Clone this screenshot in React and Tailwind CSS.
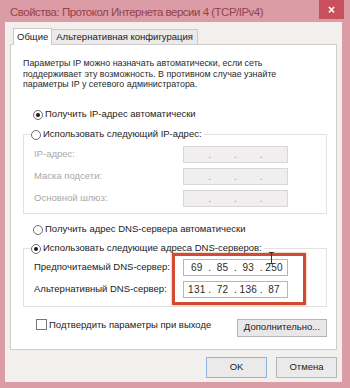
const ui = { fontFamily: '"Liberation Sans", Arial, sans-serif' };

function Radio({ checked, label }) {
  return (
    <div className="flex items-center gap-[2px] h-[14px]">
      <span className="w-[10px] h-[10px] rounded-full border border-[#6d6d6d] bg-white flex items-center justify-center">
        {checked && <span className="w-[4px] h-[4px] rounded-full bg-[#1a1a1a]" />}
      </span>
      <span className="text-[9.5px] text-[#222]">{label}</span>
    </div>
  );
}

function IpBox({ values, disabled }) {
  const segs = values || ['', '', '', ''];
  return (
    <div
      className={`w-[105px] h-[17px] border flex items-center ${
        disabled ? 'bg-[#f0eeee] border-[#d8d6d6] text-[#9a9a9a]' : 'bg-white border-[#b9b6b6] text-[#2a2a2a]'
      }`}
    >
      {segs.map((v, i) => (
        <div key={i} className="flex-1 flex items-center h-full">
          <span className="flex-1 text-center text-[10px] tracking-[0.3px]">{v}</span>
          {i < 3 && <span className="w-0 flex justify-center text-[10px]">.</span>}
        </div>
      ))}
    </div>
  );
}

function Row({ label, disabled, values }) {
  return (
    <div className="flex items-center justify-between h-[17px] pl-[3px] pr-[31px]">
      <span className={`text-[9.5px] ${disabled ? 'text-[#a8a8a8]' : 'text-[#222]'}`}>{label}</span>
      <IpBox disabled={disabled} values={values} />
    </div>
  );
}

export default function App() {
  return (
    <div className="w-[350px] h-[388px] bg-[#dc9ca5] flex flex-col" style={ui}>
      {/* title bar */}
      <div className="h-[22px] flex items-start justify-between pl-[10px] pr-[6px]">
        <span className="mt-[4px] whitespace-nowrap text-[11.5px] tracking-[-0.5px] text-[#93434e]">
          Свойства: Протокол Интернета версии 4 (TCP/IPv4)
        </span>
        <div className="w-[25px] h-[19px] bg-[#c8505a] text-white flex items-center justify-center text-[12px] font-bold">
          ×
        </div>
      </div>

      {/* client area */}
      <div className="ml-[5px] mr-[8px] mb-[6px] flex-1 bg-[#f2efef] px-[5px] pt-[6px] flex flex-col">
        {/* tabs */}
        <div className="flex items-end h-[16px] pl-[3px] text-[9.5px] text-[#222]">
          <div className="h-[17px] -mb-px px-[3px] bg-white border border-b-0 border-[#cfcaca] flex items-center relative z-10">
            Общие
          </div>
          <div className="h-[15px] px-[4px] bg-[#ece9e9] border border-b-0 border-l-0 border-[#cfcaca] flex items-center">
            Альтернативная конфигурация
          </div>
        </div>

        {/* panel */}
        <div className="relative h-[306px] bg-white border border-[#d2cdcd] pl-[12px] pr-[9px] pt-[13px] flex flex-col">
          <p className="text-[8.9px] leading-[10.5px] text-[#2a2a2a]">
            Параметры IP можно назначать автоматически, если сеть
            <br />
            поддерживает эту возможность. В противном случае узнайте
            <br />
            параметры IP у сетевого администратора.
          </p>

          <div className="mt-[18px] ml-[10px]">
            <Radio checked label="Получить IP-адрес автоматически" />
          </div>

          <fieldset className="mt-[6px] border border-[#e4e1e1] px-[7px] pb-[6px]">
            <legend className="px-0 bg-white pr-[2px]">
              <Radio label="Использовать следующий IP-адрес:" />
            </legend>
            <div className="flex flex-col gap-[5px] mt-[4px]">
              <Row label="IP-адрес:" disabled />
              <Row label="Маска подсети:" disabled />
              <Row label="Основной шлюз:" disabled />
            </div>
          </fieldset>

          <div className="mt-[9px] ml-[10px]">
            <Radio label="Получить адрес DNS-сервера автоматически" />
          </div>

          <fieldset className="mt-[5px] border border-[#e4e1e1] px-[7px] pb-[8px]">
            <legend className="px-0 bg-white pr-[2px]">
              <Radio checked label="Использовать следующие адреса DNS-серверов:" />
            </legend>
            <div className="flex flex-col gap-[5px] mt-[3px]">
              <Row label="Предпочитаемый DNS-сервер:" values={['69', '85', '93', '250']} />
              <Row label="Альтернативный DNS-сервер:" values={['131', '72', '136', '87']} />
            </div>
          </fieldset>

          <div className="mt-[10px] flex items-start justify-between pl-[13px]">
            <div className="flex items-center gap-[2px] mt-[1px]">
              <span className="w-[11px] h-[11px] border border-[#777] bg-white" />
              <span className="text-[9.5px] text-[#222]">Подтвердить параметры при выходе</span>
            </div>
            <div className="w-[90px] h-[18px] mt-[2px] border border-[#b8b5b5] bg-[#e9e7e7] flex items-center justify-center text-[9.5px] text-[#222]">
              Дополнительно...
            </div>
          </div>

          {/* highlight */}
          <div className="absolute left-[161px] top-[208px] w-[134px] h-[52px] border-[3px] border-[#d34a33] shadow-[0_0_2px_rgba(160,40,20,0.5)]" />
          {/* text cursor */}
          <svg className="absolute left-[257px] top-[207px]" width="7" height="12" viewBox="0 0 7 12">
            <path d="M1 0.5h5M3.5 0.5v11M1 11.5h5" stroke="#333" strokeWidth="1" fill="none" />
          </svg>
        </div>

        {/* footer */}
        <div className="flex justify-end gap-[9px] pt-[7px]">
          <div className="w-[61px] h-[21px] border border-[#8fb3d9] bg-[#ebeaea] flex items-center justify-center text-[9.5px] text-[#222]">
            OK
          </div>
          <div className="w-[61px] h-[21px] border border-[#b8b5b5] bg-[#ebeaea] flex items-center justify-center text-[9.5px] text-[#222]">
            Отмена
          </div>
        </div>
      </div>
    </div>
  );
}
